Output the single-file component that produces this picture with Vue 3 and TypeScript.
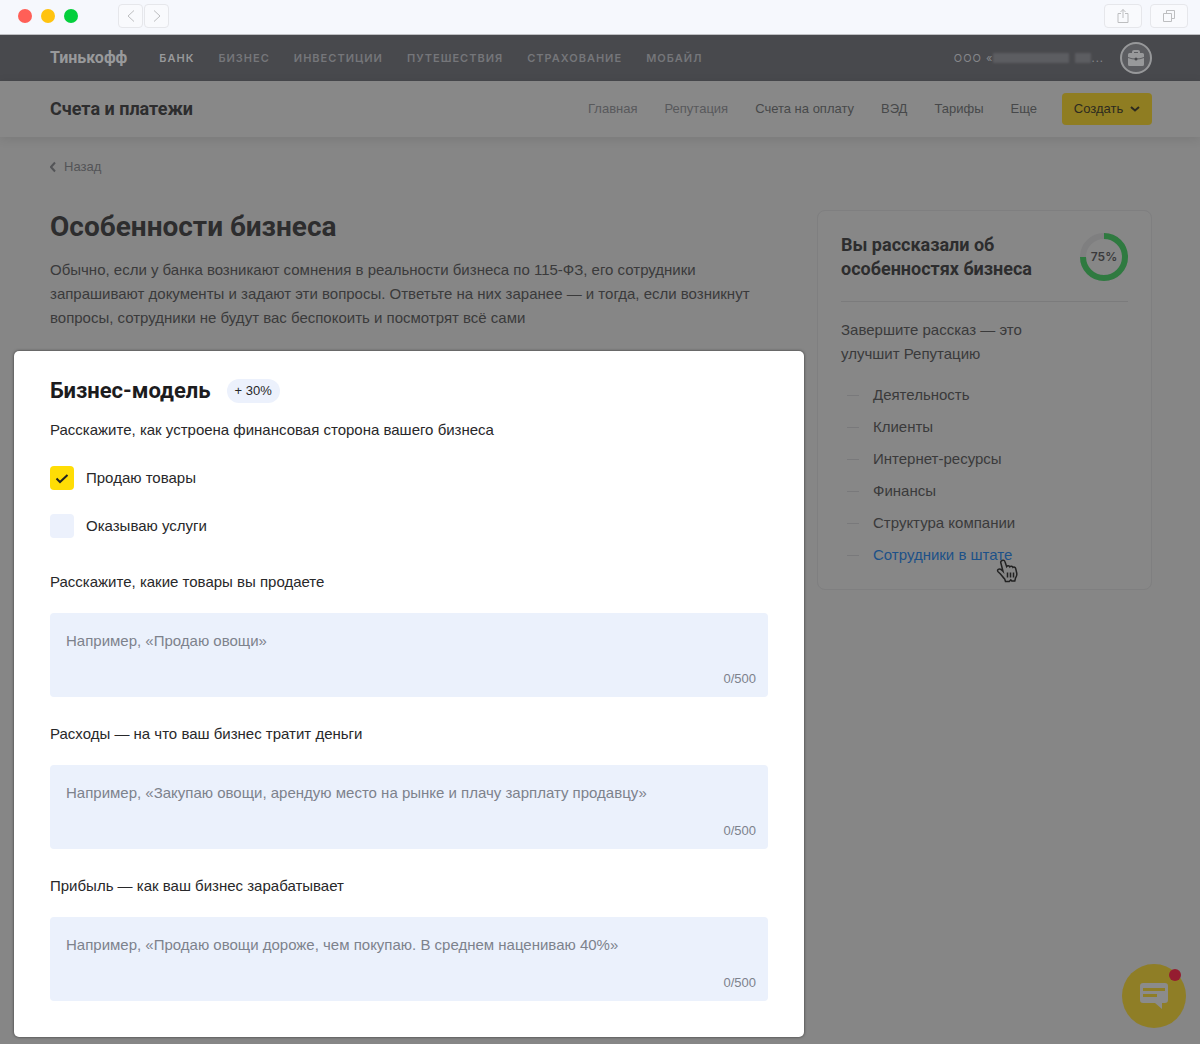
<script setup lang="ts">
import { ref } from 'vue'

interface Question {
  id: string
  label: string
  placeholder: string
}

const sections = ['Банк', 'Бизнес', 'Инвестиции', 'Путешествия', 'Страхование', 'Мобайл']

const menu = [
  { title: 'Главная', soft: true },
  { title: 'Репутация', soft: true },
  { title: 'Счета на оплату', soft: false },
  { title: 'ВЭД', soft: false },
  { title: 'Тарифы', soft: false },
  { title: 'Еще', soft: false },
]

const steps = ['Деятельность', 'Клиенты', 'Интернет-ресурсы', 'Финансы', 'Структура компании', 'Сотрудники в штате']
const hoveredStep = 'Сотрудники в штате'

const questions: Question[] = [
  { id: 'goods', label: 'Расскажите, какие товары вы продаете', placeholder: 'Например, «Продаю овощи»' },
  {
    id: 'expenses',
    label: 'Расходы — на что ваш бизнес тратит деньги',
    placeholder: 'Например, «Закупаю овощи, арендую место на рынке и плачу зарплату продавцу»',
  },
  {
    id: 'profit',
    label: 'Прибыль — как ваш бизнес зарабатывает',
    placeholder: 'Например, «Продаю овощи дороже, чем покупаю. В среднем нацениваю 40%»',
  },
]

const limit = 500
const answers = ref<Record<string, string>>({ goods: '', expenses: '', profit: '' })
const sellsGoods = ref(true)
const providesServices = ref(false)
</script>

<template>
  <div class="window">
    <div class="chrome">
      <div class="lights">
        <span class="light red"></span>
        <span class="light amber"></span>
        <span class="light green"></span>
      </div>
      <div class="history">
        <button class="tool narrow" type="button" aria-label="Предыдущая страница">
          <svg width="10" height="14" viewBox="0 0 10 14"><path d="M8 1.500 2 7l6 5.500" /></svg>
        </button>
        <button class="tool narrow" type="button" aria-label="Следующая страница">
          <svg width="10" height="14" viewBox="0 0 10 14"><path d="m2 1.500 6 5.500-6 5.500" /></svg>
        </button>
      </div>
      <div class="tools">
        <button class="tool" type="button" aria-label="Поделиться">
          <svg width="14" height="16" viewBox="0 0 14 16">
            <path d="M5 5.500H2v9h10v-9H9M7 10V1.500M4.500 4 7 1.500 9.500 4" />
          </svg>
        </button>
        <button class="tool" type="button" aria-label="Вкладки">
          <svg width="14" height="14" viewBox="0 0 14 14">
            <path d="M1.500 4.500h8v8h-8zM4.500 4.500v-3h8v8h-3" />
          </svg>
        </button>
      </div>
    </div>

    <header class="topbar">
      <a class="logo" href="#">Тинькофф</a>
      <nav class="sections">
        <a v-for="(item, i) in sections" :key="item" href="#" :class="{ current: i === 0 }">{{ item }}</a>
      </nav>
      <div class="account">
        <span class="company">ООО «<span class="mask long"></span><span class="mask short"></span>...</span>
        <button class="avatar" type="button" aria-label="Профиль компании">
          <svg width="18" height="18" viewBox="0 0 18 18">
            <path class="case" d="M2.500 4h13A1.500 1.500 0 0 1 17 5.500V8q-4 1.600-8 1.600T1 8V5.500A1.500 1.500 0 0 1 2.500 4zM1 9q4 1.600 8 1.600T17 9v6.500a1.500 1.500 0 0 1-1.500 1.500h-13A1.500 1.500 0 0 1 1 15.500z" />
            <path class="handle" d="M6 4.500V3q0-1 1-1h4q1 0 1 1v1.500" />
            <circle class="lock" cx="9" cy="10" r="1.500" />
          </svg>
        </button>
      </div>
    </header>

    <div class="subbar">
      <div class="product">Счета и платежи</div>
      <nav class="menu">
        <a v-for="item in menu" :key="item.title" href="#" :class="{ soft: item.soft }">{{ item.title }}</a>
      </nav>
      <button class="create" type="button">
        Создать
        <svg width="10" height="8" viewBox="0 0 10 8"><path d="m1 2 4 3.500L9 2" /></svg>
      </button>
    </div>

    <div class="layout">
      <main>
        <div class="intro">
          <a class="back" href="#">
            <svg width="6" height="12" viewBox="0 0 6 12"><path d="M5 1.500 1 6l4 4.500" /></svg>
            Назад
          </a>
          <h1>Особенности бизнеса</h1>
          <p>
            Обычно, если у банка возникают сомнения в реальности бизнеса по 115-ФЗ, его сотрудники
            запрашивают документы и задают эти вопросы. Ответьте на них заранее — и тогда, если возникнут
            вопросы, сотрудники не будут вас беспокоить и посмотрят всё сами
          </p>
        </div>

        <form class="card" @submit.prevent>
          <div class="card-title">
            <h2>Бизнес-модель</h2>
            <span class="bonus">+ 30%</span>
          </div>
          <p class="lead">Расскажите, как устроена финансовая сторона вашего бизнеса</p>

          <div class="checks">
            <label class="check">
              <span class="box">
                <input v-model="sellsGoods" type="checkbox" />
                <svg v-if="sellsGoods" width="24" height="24" viewBox="0 0 24 24"><path d="m6.500 12.500 3.500 3.500 7.500-7" /></svg>
              </span>
              Продаю товары
            </label>
            <label class="check">
              <span class="box">
                <input v-model="providesServices" type="checkbox" />
                <svg v-if="providesServices" width="24" height="24" viewBox="0 0 24 24"><path d="m6.500 12.500 3.500 3.500 7.500-7" /></svg>
              </span>
              Оказываю услуги
            </label>
          </div>

          <div class="questions">
            <div v-for="q in questions" :key="q.id" class="question">
              <label :for="q.id">{{ q.label }}</label>
              <div class="field">
                <textarea :id="q.id" v-model="answers[q.id]" :placeholder="q.placeholder" :maxlength="limit"></textarea>
                <span class="counter">{{ answers[q.id].length }}/{{ limit }}</span>
              </div>
            </div>
          </div>
        </form>
      </main>

      <aside class="progress">
        <div class="progress-head">
          <h3>Вы рассказали об особенностях бизнеса</h3>
          <div class="ring">
            <svg width="48" height="48" viewBox="0 0 48 48">
              <circle class="track" cx="24" cy="24" r="21" />
              <circle class="value" cx="24" cy="24" r="21" pathLength="100" transform="rotate(-90 24 24)" />
            </svg>
            <span>75%</span>
          </div>
        </div>
        <p class="hint">Завершите рассказ — это<br />улучшит Репутацию</p>
        <ul>
          <li v-for="step in steps" :key="step">
            <a href="#" :class="{ hovered: step === hoveredStep }">{{ step }}</a>
            <svg v-if="step === hoveredStep" class="pointer" width="24" height="26" viewBox="0 0 24 26">
              <path d="M6 2.500c1.500-.8 2.600 0 3 1.300l1.600 4.700c.7-1.200 2.700-1 3.200.3.900-1 2.700-.7 3.100.6 1-.7 2.600-.2 2.800 1.200l1 4.400c.5 2.300-.2 3.600-1.200 5l-.7 3h-3l-1-1.200-1.500 1.700H9.500L8.700 21C6.500 19 5.500 16.500 2.300 14c-1-.9-1-2 0-2.600 1.400-.8 3 .1 4.700 1.900L4.800 4.700C4.500 3.700 5 2.900 6 2.500z" />
              <path d="M11.500 14.500v5M14.500 14.500v5M17.500 14.500v5" />
            </svg>
          </li>
        </ul>
      </aside>
    </div>

    <button class="chat" type="button" aria-label="Открыть чат">
      <svg width="30" height="28" viewBox="0 0 30 28">
        <path class="bubble" d="M4 1h22a3 3 0 0 1 3 3v14a3 3 0 0 1-3 3h-3v6l-7-6H4a3 3 0 0 1-3-3V4a3 3 0 0 1 3-3z" />
        <path class="lines" d="M4 7.500h22M4 13.500h14" />
      </svg>
      <span class="badge"></span>
    </button>
  </div>
</template>

<style>
body {
  margin: 0;
  background: #868686;
}
</style>

<style scoped>
.window {
  min-height: 100vh;
  font-family: "Liberation Sans", Arial, sans-serif;
  font-size: 15px;
  line-height: 24px;
  color: #3a3a3b;
  background: #868686;
}

h1,
h2,
h3,
p,
ul {
  margin: 0;
  padding: 0;
}

a {
  color: inherit;
  text-decoration: none;
}

button {
  padding: 0;
  border: 0;
  font: inherit;
  color: inherit;
  cursor: pointer;
}

svg {
  display: block;
  flex: none;
  fill: none;
  stroke: currentColor;
}

.chrome {
  display: flex;
  align-items: center;
  box-sizing: border-box;
  height: 35px;
  padding: 0 12px 2px 18px;
  background: #f6f8fd;
  border-bottom: 1px solid #bfc0c4;
}

.lights {
  display: flex;
  gap: 9px;
}

.light {
  width: 14px;
  height: 14px;
  border-radius: 50%;
}

.red {
  background: #ff5f57;
}

.amber {
  background: #ffc30f;
}

.green {
  background: #04cf3c;
}

.history {
  display: flex;
  gap: 1px;
  margin-left: 40px;
}

.tools {
  display: flex;
  gap: 8px;
  margin-left: auto;
}

.tool {
  display: flex;
  align-items: center;
  justify-content: center;
  box-sizing: border-box;
  width: 38px;
  height: 24px;
  border: 1px solid #e6e7eb;
  border-radius: 4px;
  background: #f9fafd;
  color: #bdbec0;
}

.narrow {
  width: 25px;
}

.topbar {
  display: flex;
  align-items: center;
  height: 46px;
  padding: 0 48px 0 50px;
  background: #48494d;
  color: #98999b;
}

.logo {
  margin-right: 32px;
  font: 700 16px/24px Roboto, sans-serif;
}

.sections {
  display: flex;
  gap: 24px;
  font-family: Inter, sans-serif;
  font-size: 11px;
  font-weight: 600;
  letter-spacing: 1px;
  text-transform: uppercase;
  color: #75767a;
}

.sections .current {
  color: #98999b;
}

.account {
  display: flex;
  align-items: center;
  gap: 16px;
  margin-left: auto;
}

.company {
  display: flex;
  align-items: center;
  font-family: Inter, sans-serif;
  font-size: 11px;
  letter-spacing: 1px;
  color: #85868a;
}

.mask {
  height: 10px;
  background: #5c5d61;
  filter: blur(1px);
}

.long {
  width: 76px;
  margin-right: 6px;
}

.short {
  width: 16px;
}

.avatar {
  display: flex;
  align-items: center;
  justify-content: center;
  box-sizing: border-box;
  width: 32px;
  height: 32px;
  border: 2px solid #97989a;
  border-radius: 50%;
  background: #5c5d61;
}

.case {
  fill: #98999b;
  stroke: none;
}

.handle {
  stroke: #98999b;
  stroke-width: 2;
}

.lock {
  fill: #48494d;
  stroke: none;
}

.subbar {
  display: flex;
  align-items: center;
  height: 56px;
  padding: 0 48px 0 50px;
  background: #888888;
  box-shadow: 0 2px 10px rgba(0, 0, 0, 0.1);
}

.product {
  font: 700 18px/24px Roboto, sans-serif;
  color: #2d2d2e;
}

.menu {
  display: flex;
  gap: 27px;
  margin: 0 25px 0 auto;
  font-size: 13px;
  color: #47484a;
}

.menu .soft {
  color: #58595c;
}

.create {
  display: flex;
  align-items: center;
  justify-content: center;
  gap: 7px;
  width: 90px;
  height: 32px;
  border-radius: 4px;
  background: #8f7d22;
  font-size: 13px;
  color: #2c2a20;
}

.create svg {
  stroke-width: 2;
}

.layout {
  display: grid;
  grid-template-columns: minmax(0, 1fr) 335px;
  gap: 13px;
  padding: 18px 48px 7px 14px;
}

.intro {
  padding: 0 36px;
}

.back {
  display: flex;
  align-items: center;
  gap: 8px;
  font-size: 13px;
  color: #535457;
}

.back svg {
  stroke-width: 2;
}

h1 {
  margin-top: 32px;
  font: 700 28px/32px Roboto, sans-serif;
  color: #2d2d2e;
}

.intro p {
  margin-top: 15px;
}

.card {
  margin-top: 21px;
  padding: 24px 36px 36px;
  border-radius: 5px;
  background: #ffffff;
  box-shadow: 0 0 3px rgba(0, 0, 0, 0.6);
  color: #28282a;
}

.card-title {
  display: flex;
  align-items: center;
  gap: 16px;
}

h2 {
  font: 700 22px/32px Roboto, sans-serif;
  color: #1c1c1e;
}

.bonus {
  padding: 0 8px;
  border-radius: 12px;
  background: #ecf1fc;
  font-size: 13px;
}

.lead {
  margin-top: 11px;
}

.checks {
  display: flex;
  flex-direction: column;
  align-items: flex-start;
  gap: 24px;
  margin-top: 24px;
}

.check {
  display: flex;
  align-items: center;
  gap: 12px;
}

.box {
  position: relative;
  width: 24px;
  height: 24px;
}

.box input {
  display: block;
  appearance: none;
  width: 24px;
  height: 24px;
  margin: 0;
  border-radius: 4px;
  background: #ecf1fc;
}

.box input:checked {
  background: #ffdd05;
}

.box svg {
  position: absolute;
  inset: 0;
  stroke: #222222;
  stroke-width: 2;
  pointer-events: none;
}

.questions {
  display: flex;
  flex-direction: column;
  gap: 25px;
  margin-top: 32px;
}

.question {
  display: flex;
  flex-direction: column;
  gap: 19px;
}

.field {
  display: flex;
  flex-direction: column;
  padding: 16px 12px 8px 16px;
  border-radius: 4px;
  background: #ebf1fc;
  color: #7d828c;
}

textarea {
  display: block;
  height: 40px;
  padding: 0;
  border: 0;
  outline: 0;
  resize: none;
  background: transparent;
  font: inherit;
  color: #28282a;
}

textarea::placeholder {
  color: #7d828c;
  opacity: 1;
}

.counter {
  align-self: flex-end;
  font-size: 13px;
  line-height: 20px;
}

.progress {
  align-self: start;
  margin-top: 55px;
  padding: 22px 23px;
  border: 1px solid #7f7f80;
  border-radius: 8px;
  background: #878787;
}

.progress-head {
  display: flex;
  justify-content: space-between;
  padding-bottom: 20px;
  border-bottom: 1px solid #7b7b7c;
}

h3 {
  width: 210px;
  font: 700 18px/24px Roboto, sans-serif;
  color: #2d2d2e;
}

.ring {
  display: grid;
  place-items: center;
  width: 48px;
  height: 48px;
  font-family: Inter, sans-serif;
  font-size: 12px;
  font-weight: 600;
}

.ring > * {
  grid-area: 1 / 1;
}

.ring circle {
  stroke-width: 6;
}

.track {
  stroke: #7f7f80;
}

.value {
  stroke: #2f7a40;
  stroke-dasharray: 75 25;
}

.hint {
  margin-top: 16px;
}

ul {
  display: flex;
  flex-direction: column;
  gap: 8px;
  margin-top: 17px;
  list-style: none;
}

li {
  display: flex;
  align-items: center;
  gap: 14px;
  position: relative;
  padding-left: 6px;
}

li::before {
  content: "";
  width: 12px;
  height: 1px;
  background: #79797b;
}

.hovered {
  color: #1d5188;
}

.pointer {
  position: absolute;
  left: 155px;
  top: 15px;
  fill: #868686;
  stroke: #222222;
  stroke-width: 1.5;
}

.chat {
  position: fixed;
  right: 14px;
  bottom: 16px;
  display: flex;
  align-items: center;
  justify-content: center;
  width: 64px;
  height: 64px;
  border-radius: 50%;
  background: #8f7e26;
}

.bubble {
  fill: #8b8b8b;
  stroke: none;
}

.lines {
  stroke: #8f7e26;
  stroke-width: 3;
}

.badge {
  position: absolute;
  top: 5px;
  right: 5px;
  width: 12px;
  height: 12px;
  border-radius: 50%;
  background: #951c30;
}
</style>
